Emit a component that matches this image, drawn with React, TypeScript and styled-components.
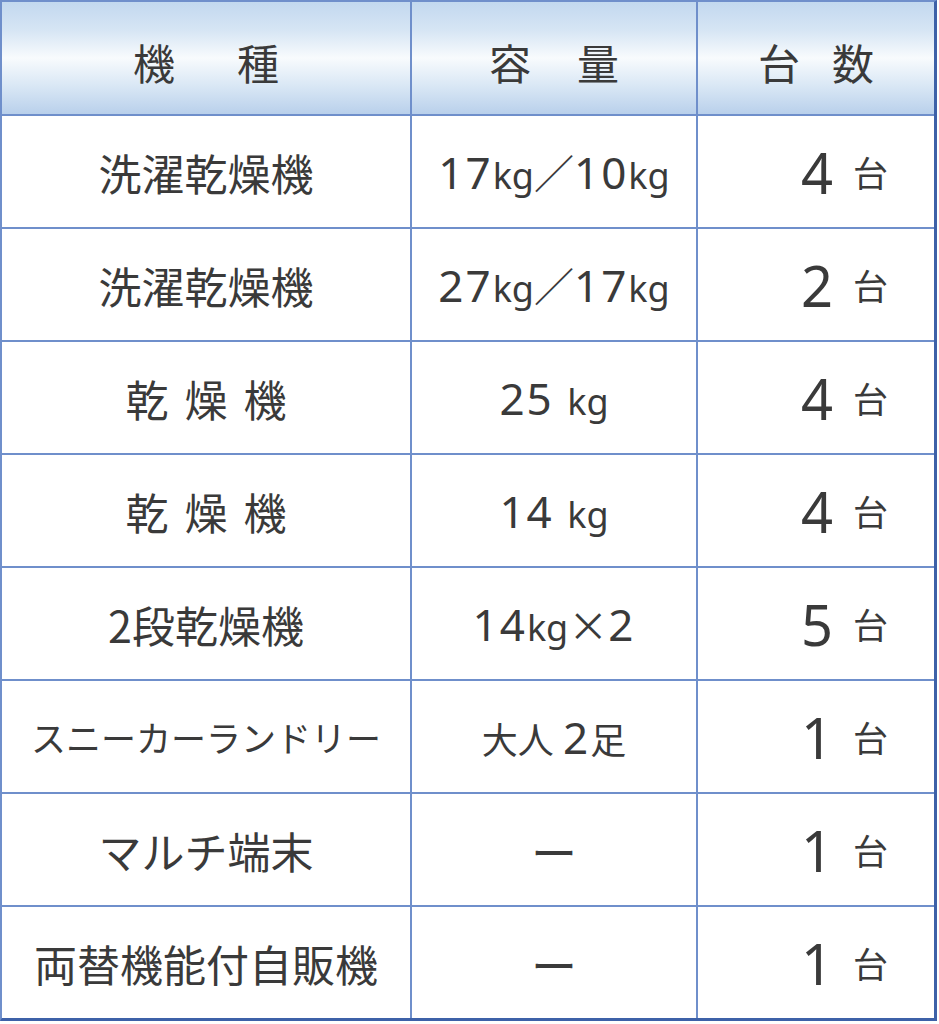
import styled, { createGlobalStyle } from "styled-components";

const GlobalStyle = createGlobalStyle`
    body {
        margin: 0;
        background: #ffffff;
        font-family: "Noto Sans", "Noto Sans CJK JP", sans-serif;
        color: #3a3a3a;
    }
`;

const Table = styled.div`
    width: 937px;
    box-sizing: border-box;
    border-top: 2px solid #6f8fcb;
    border-left: 2px solid #6f8fcb;
    border-right: 3px solid #3d61a8;
    border-bottom: 3px solid #3d61a8;
`;

const Row = styled.div<{ head?: boolean; last?: boolean }>`
    display: grid;
    grid-template-columns: 408px 284px 236px;
    column-gap: 2px;
    background: #6f8fcb;
    height: ${(p) => (p.head ? 112 : 111)}px;
    border-bottom: ${(p) => (p.last ? "none" : "2px solid #6f8fcb")};
`;

const HeadCell = styled.div<{ spacing: number }>`
    display: flex;
    justify-content: center;
    align-items: center;
    padding-top: 6px;
    font-family: "Noto Sans CJK JP", sans-serif;
    font-size: 42px;
    letter-spacing: ${(p) => p.spacing}px;
    text-indent: ${(p) => p.spacing}px;
    background: linear-gradient(
        to bottom,
        #c2d8ef 0%,
        #d6e5f4 25%,
        #f8fbfd 50%,
        #d9e7f5 75%,
        #b9d0eb 100%
    );
`;

const Cell = styled.div<{ size?: number; spacing?: number }>`
    display: flex;
    justify-content: center;
    align-items: center;
    background: #ffffff;
    font-family: "Noto Sans CJK JP", sans-serif;
    font-size: ${(p) => p.size ?? 43}px;
    letter-spacing: ${(p) => p.spacing ?? 0}px;
    text-indent: ${(p) => p.spacing ?? 0}px;
    white-space: pre;
`;

const Capacity = styled(Cell)`
    font-family: "Noto Sans", "Noto Sans CJK JP", sans-serif;
    font-size: 44px;
    letter-spacing: 2px;
`;

const Unit = styled.span`
    font-family: "Noto Sans", "Noto Sans CJK JP", sans-serif;
    font-size: 36px;
    letter-spacing: 0;
`;

const Wide = styled.span<{ size?: number }>`
    font-family: "Noto Sans CJK JP", sans-serif;
    font-size: ${(p) => p.size ?? 40}px;
    letter-spacing: 0;
`;

const CountCell = styled(Cell)`
    justify-content: flex-end;
    padding-right: 46px;
    box-sizing: border-box;
`;

const CountGroup = styled.span`
    display: flex;
    align-items: center;
    gap: 20px;
`;

const CountNum = styled.span`
    font-family: "Noto Sans", sans-serif;
    font-size: 56px;
    line-height: 1;
`;

const CountUnit = styled.span`
    font-family: "Noto Sans CJK JP", sans-serif;
    font-size: 35px;
    line-height: 1;
`;

type Part = string | { unit: string } | { wide: string; size?: number };

const rows: { name: string; nameSize?: number; nameSpacing?: number; capacity: Part[]; count: number }[] = [
    { name: "洗濯乾燥機", capacity: ["17", { unit: "kg" }, { wide: "／" }, "10", { unit: "kg" }], count: 4 },
    { name: "洗濯乾燥機", capacity: ["27", { unit: "kg" }, { wide: "／" }, "17", { unit: "kg" }], count: 2 },
    { name: "乾燥機", nameSpacing: 16, capacity: ["25 ", { unit: "kg" }], count: 4 },
    { name: "乾燥機", nameSpacing: 16, capacity: ["14 ", { unit: "kg" }], count: 4 },
    { name: "2段乾燥機", capacity: ["14", { unit: "kg" }, { wide: "×" }, "2"], count: 5 },
    { name: "スニーカーランドリー", nameSize: 35, capacity: [{ unit: "大人 " }, "2", { unit: "足" }], count: 1 },
    { name: "マルチ端末", capacity: [{ wide: "ー", size: 46 }], count: 1 },
    { name: "両替機能付自販機", capacity: [{ wide: "ー", size: 46 }], count: 1 },
];

function renderPart(p: Part, j: number) {
    if (typeof p === "string") return <span key={j}>{p}</span>;
    if ("unit" in p) return <Unit key={j}>{p.unit}</Unit>;
    return (
        <Wide key={j} size={p.size}>
            {p.wide}
        </Wide>
    );
}

function App() {
    return (
        <>
            <GlobalStyle />
            <Table>
                <Row head>
                    <HeadCell spacing={62}>機種</HeadCell>
                    <HeadCell spacing={46}>容量</HeadCell>
                    <HeadCell spacing={32}>台数</HeadCell>
                </Row>
                {rows.map((r, i) => (
                    <Row key={i} last={i === rows.length - 1}>
                        <Cell size={r.nameSize} spacing={r.nameSpacing}>
                            {r.name}
                        </Cell>
                        <Capacity>
                            <span>{r.capacity.map(renderPart)}</span>
                        </Capacity>
                        <CountCell>
                            <CountGroup>
                                <CountNum>{r.count}</CountNum>
                                <CountUnit>台</CountUnit>
                            </CountGroup>
                        </CountCell>
                    </Row>
                ))}
            </Table>
        </>
    );
}

export default App;
